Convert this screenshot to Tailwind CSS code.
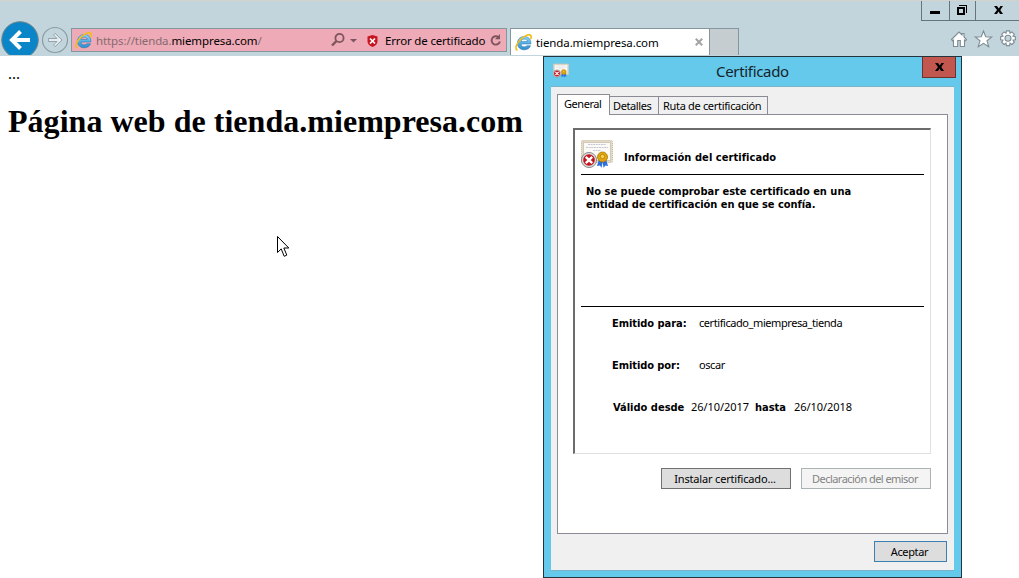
<!DOCTYPE html>
<html lang="es"><head><meta charset="utf-8"><title>tienda.miempresa.com</title>
<script src="https://cdn.jsdelivr.net/npm/@tailwindcss/browser@4"></script></head>
<body class="w-[1019px] h-[578px] overflow-hidden bg-white text-black relative">
<svg width="0" height="0" class="absolute">
<defs>
<linearGradient id="blue" x1="0" y1="0" x2="0" y2="1"><stop offset="0" stop-color="#8fd6f6"/><stop offset=".5" stop-color="#56b2e4"/><stop offset="1" stop-color="#2f8bcb"/></linearGradient>
<symbol id="ie" viewBox="0 0 16 16">
<path d="M14.9 9.400H5.600C5.800 11.200 7 12.100 8.800 12.100c1.200 0 2-.4 2.400-1.100h3.400C13.800 13.400 11.600 14.900 8.700 14.900 4.900 14.900 2.300 12.400 2.300 8.700S5 2.400 8.700 2.400c3.900 0 6.500 2.500 6.200 7zM11.600 7C11.400 5.500 10.300 4.800 8.700 4.800 7.100 4.800 6 5.600 5.700 7z" fill="url(#blue)" stroke="#2472b0" stroke-width=".5"/>
<path d="M1.700 15C-.3 13.300 1.700 8.500 5.500 4.900 9.300 1.300 13.500-.3 14.800 1.300c.7.800.5 2 0 3.100" fill="none" stroke="#f3bd16" stroke-width="1.500" stroke-linecap="round"/>
</symbol>
<symbol id="cert" viewBox="0 0 32 28">
<rect x=".5" y=".5" width="31" height="22" rx="1" fill="#e2d8c6" stroke="#c2b59f" stroke-dasharray="1 1"/>
<rect x="2.500" y="2.500" width="27" height="18" fill="#fbfaf7" stroke="#d3c9b8"/>
<path d="M7 4.500h18M5 7.500h22M12 10.500h8" stroke="#c6c8d4" stroke-width="1" stroke-dasharray="2 .6"/>
<path d="M18 19l-2 7 3-.6 1.500 2.400 1.500-7zM25 19l2 7-2.500-.6-2 2.400-1-7z" fill="#2b6fe0"/>
<circle cx="21.500" cy="17" r="5" fill="#e2a50c" stroke="#a87805" stroke-width=".8"/><circle cx="21.500" cy="16.500" r="2.200" fill="#f7cf52" stroke="#b07c08" stroke-width=".8"/>
<circle cx="8" cy="20" r="7.600" fill="#d9d9d9" stroke="#777" stroke-width=".8"/><circle cx="8" cy="20" r="5.800" fill="#c4141c"/>
<path d="M4.800 16.800l6.400 6.400M11.200 16.800l-6.400 6.400" stroke="#fff" stroke-width="2.400"/>
</symbol>
</defs></svg>

<header class="h-14 bg-[#c3d5dc] border-t border-[#d3d2ce] relative overflow-hidden font-['Noto_Sans','Open_Sans',sans-serif]">
  <div class="flex h-[20px] justify-end">
    <div class="w-7 border-l border-b border-[#66757c] flex justify-center"><i class="block w-[10px] h-[3px] bg-black mt-[10px] mr-px"></i></div>
    <div class="w-[26px] border-l border-b border-[#66757c]"><svg class="ml-[7px] mt-1" width="11" height="11" shape-rendering="crispEdges"><path d="M2 .5h7.500V8" stroke="#000" fill="none"/><path d="M1 3h6v6H1z" stroke="#000" stroke-width="2" fill="none"/></svg></div>
    <div class="w-11 border-l border-b border-[#66757c]"><svg class="ml-[18px] mt-[5px]" width="10" height="8"><path d="M0 0h3l1.800 2.600L6.500 0H9L6.300 4 9 8H6L4.500 5.500 3 8H0l3-4z"/></svg></div>
  </div>
  <div class="flex h-[28px] mt-[6px] items-start">
    <svg class="-mt-[7px]" width="71" height="35" viewBox="0 20 71 35"><circle cx="20" cy="40" r="18.300" fill="#0a86c8" stroke="#77858c" stroke-width="1"/><path d="M30 40H12M20.500 31.500L12 40l8.500 8.500" fill="none" stroke="#fff" stroke-width="4"/><circle cx="55" cy="40" r="12.500" fill="none" stroke="#8b9ba2" stroke-width="1.200"/><path d="M48.500 38.500h8.500l-3.500-3.500 1.600-1.600L62 40l-6.900 6.600-1.600-1.600 3.500-3.500h-8.500z" fill="#e7eef1" stroke="#8b9ba2" stroke-width=".9"/></svg>
    <div class="mt-px w-[436px] h-6 bg-[#eeaab6] border border-[#84969e] flex items-center text-[11.5px] tracking-[-0.1px] whitespace-nowrap">
      <svg class="ml-[3px]" width="17" height="17"><use href="#ie"/></svg>
      <div class="ml-1 mt-px w-[235px]"><span class="text-[#856a70]">https://tienda.</span>miempresa.com<span class="text-[#856a70]">/</span></div>
      <svg width="30" height="14" viewBox="0 0 30 14"><circle cx="8.500" cy="5" r="4.100" fill="none" stroke="#7d555d" stroke-width="1.800"/><path d="M5.500 8L1 12.500" stroke="#7d555d" stroke-width="2.400"/><path d="M19 6h7l-3.500 3.600z" fill="#7d555d"/></svg>
      <svg class="ml-[6px] mt-px" width="11" height="12"><path d="M5.500 0l5 1.500v5c0 2.500-2 4.500-5 5.500-3-1-5-3-5-5.500v-5z" fill="#c8151f"/><path d="M3 3.500l5 5M8 3.500l-5 5" stroke="#fff" stroke-width="1.700"/></svg>
      <span class="ml-[7px] mt-px w-[105px] tracking-[-0.17px]">Error de certificado</span>
      <svg width="12" height="13"><path d="M8.500 3.200A4.200 4.200 0 1 0 9.900 7.500" fill="none" stroke="#7d555d" stroke-width="1.900"/><path d="M10 0v5.200H5z" fill="#7d555d"/></svg>
    </div>
    <div class="ml-[3px] mt-px w-[200px] h-[27px] bg-white border border-b-0 border-[#84969e] flex items-center text-[11.5px] tracking-[-0.1px] whitespace-nowrap">
      <svg class="ml-[4px]" width="17" height="17"><use href="#ie"/></svg><span class="ml-1 mt-[2px] w-[159px]">tienda.miempresa.com</span>
      <svg width="8" height="8"><path d="M.8.8l6.400 6.400M7.200.8L.8 7.200" stroke="#a3a3a3" stroke-width="2"/></svg>
    </div>
    <div class="mt-px w-[29px] h-[27px] bg-[#c5cdd1] border border-l-0 border-b-0 border-[#84969e]"></div>
    <svg class="ml-[211px] mt-[2px]" width="69" height="20" viewBox="0 0 69 20"><g fill="#fff" stroke="#7e8c94" stroke-width="1.100"><path d="M1.500 10.500L9 3l3 3V4.500h2V8l2.500 2.500-1 1.200-1-.7v6.500h-4.200v-6H7.700v6H3.500V11l-1 .7z"/><path d="M33.500 2l2.200 5.800 6 .3-4.700 3.700 1.700 5.900-5.200-3.400-5.200 3.400 1.700-5.900-4.700-3.700 6-.3z"/><path transform="translate(-2.900 .8) scale(1.050)" d="M56.500 1h3l.4 2.200 1.900-1.200 2.200 2.200-1.200 1.900 2.200.4v3l-2.200.4 1.200 1.900-2.200 2.200-1.900-1.200-.4 2.200h-3l-.4-2.200-1.900 1.200-2.200-2.200 1.200-1.900-2.200-.4v-3l2.200-.4L52 4.200 54.200 2l1.900 1.200z"/><circle cx="58" cy="9.300" r="3" fill="#c3d5dc"/></g></svg>
  </div>
</header>

<main class="pl-2 font-['Liberation_Serif',serif]">
  <p class="mt-2 text-[16px] leading-5">...</p>
  <h1 class="mt-[19px] text-[32px] leading-[37px] tracking-[0.03px] font-bold whitespace-nowrap">Página web de tienda.miempresa.com</h1>
</main>
<svg class="absolute left-[277px] top-[236px]" width="13" height="22"><path d="M.5.500v16l3.700-3.600 3 7.400 2.600-1.200-3-7.100h5z" fill="#fff" stroke="#000"/></svg>

<section class="absolute left-[543px] top-[56px] w-[419px] h-[522px] border border-[#24343c] bg-[#64c9ea] px-[7px] text-[11px] font-['Noto_Sans',sans-serif] whitespace-nowrap">
  <div class="h-[29px] flex relative">
    <svg class="ml-[2px] mt-[6px]" width="16" height="15"><use href="#cert"/></svg>
    <div class="ml-[147px] mt-[4px] text-[15px] leading-[21px] tracking-[-0.32px] text-[#16232a]">Certificado</div>
    <div class="absolute left-[371px] top-0 w-[34px] h-[21px] bg-[#c2574f] border border-t-0 border-[#6b3330]"><svg class="ml-[12px] mt-[6px]" width="10" height="8"><path d="M0 0h3l1.800 2.600L6.500 0H9L6.300 4 9 8H6L4.500 5.500 3 8H0l3-4z"/></svg></div>
  </div>
  <div class="h-[485px] bg-[#f0f0f0] border-y border-[#79b3ca] px-[6px] pt-[7px]">
    <div class="flex items-end h-[20px] relative leading-[16px]">
      <div class="w-[53px] h-[21px] -mb-px relative border border-b-0 border-[#8b8b96] bg-white pl-[6px] pt-[1px] tracking-[-0.45px]">General</div>
      <div class="w-[49px] h-[19px] -mb-px border border-l-0 border-[#8b8b96] pl-[3px] pt-px tracking-[-0.38px]">Detalles</div>
      <div class="w-[109px] h-[19px] -mb-px border border-l-0 border-[#8b8b96] pl-[4px] pt-px tracking-[-0.32px]">Ruta de certificación</div>
    </div>
    <div class="w-[391px] h-[420px] bg-white border border-[#8b8b96] pl-[15px] pt-[13px]">
      <div class="w-[358px] h-[326px] border-t-2 border-l-2 border-r border-b border-t-[#6c6c6c] border-l-[#6c6c6c] border-r-[#e0e0e0] border-b-[#e0e0e0] pl-[6px]">
        <div class="w-[343px] h-[45px] border-b border-black flex"><svg class="mt-[10px]" width="32" height="28"><use href="#cert"/></svg><b class="ml-[11px] mt-[20px] leading-[16px] tracking-[0.06px] font-['DejaVu_Sans_Condensed','DejaVu_Sans',sans-serif]">Información del certificado</b></div>
        <div class="w-[343px] h-[132px] border-b border-black pl-[5px] pt-[10px] leading-[13px] font-bold font-['DejaVu_Sans_Condensed','DejaVu_Sans',sans-serif]">No se puede comprobar este certificado en una<br><span class="tracking-[-0.04px]">entidad de certificación en que se confía.</span></div>
        <div class="pl-[31px] pt-[8px] leading-[16px]">
          <div class="flex h-[42px]"><b class="w-[87px] pt-px tracking-[-0.05px] font-['DejaVu_Sans_Condensed','DejaVu_Sans',sans-serif]">Emitido para:</b><span class="tracking-[-0.43px]">certificado_miempresa_tienda</span></div>
          <div class="flex h-[42px]"><b class="w-[87px] pt-px tracking-[-0.07px] font-['DejaVu_Sans_Condensed','DejaVu_Sans',sans-serif]">Emitido por:</b><span class="tracking-[-0.4px]">oscar</span></div>
          <div class="flex h-[42px]"><b class="w-[79px] pl-px pt-px font-['DejaVu_Sans_Condensed','DejaVu_Sans',sans-serif]">Válido desde</b><span class="w-[58px] tracking-[-0.05px]">26/10/2017</span><b class="ml-[6px] w-[39px] pt-px font-['DejaVu_Sans_Condensed','DejaVu_Sans',sans-serif]">hasta</b><span class="tracking-[-0.05px]">26/10/2018</span></div>
        </div>
      </div>
      <div class="mt-[14px] ml-[88px] flex gap-[10px] text-center leading-[20px]">
        <div class="w-[130px] h-[21px] border border-[#707070] bg-[#ddd] pr-[2px] tracking-[-0.18px]">Instalar certificado...</div>
        <div class="w-[130px] h-[21px] border border-[#adb2b5] bg-[#f4f4f4] pr-[2px] text-[#838383] tracking-[-0.55px]">Declaración del emisor</div>
      </div>
    </div>
    <div class="mt-[7px] ml-[317px] w-[73px] h-[21px] border border-[#3c7fb1] bg-[#ddd] pr-[2px] text-center leading-[20px] tracking-[-0.35px]">Aceptar</div>
  </div>
</section>
</body></html>
